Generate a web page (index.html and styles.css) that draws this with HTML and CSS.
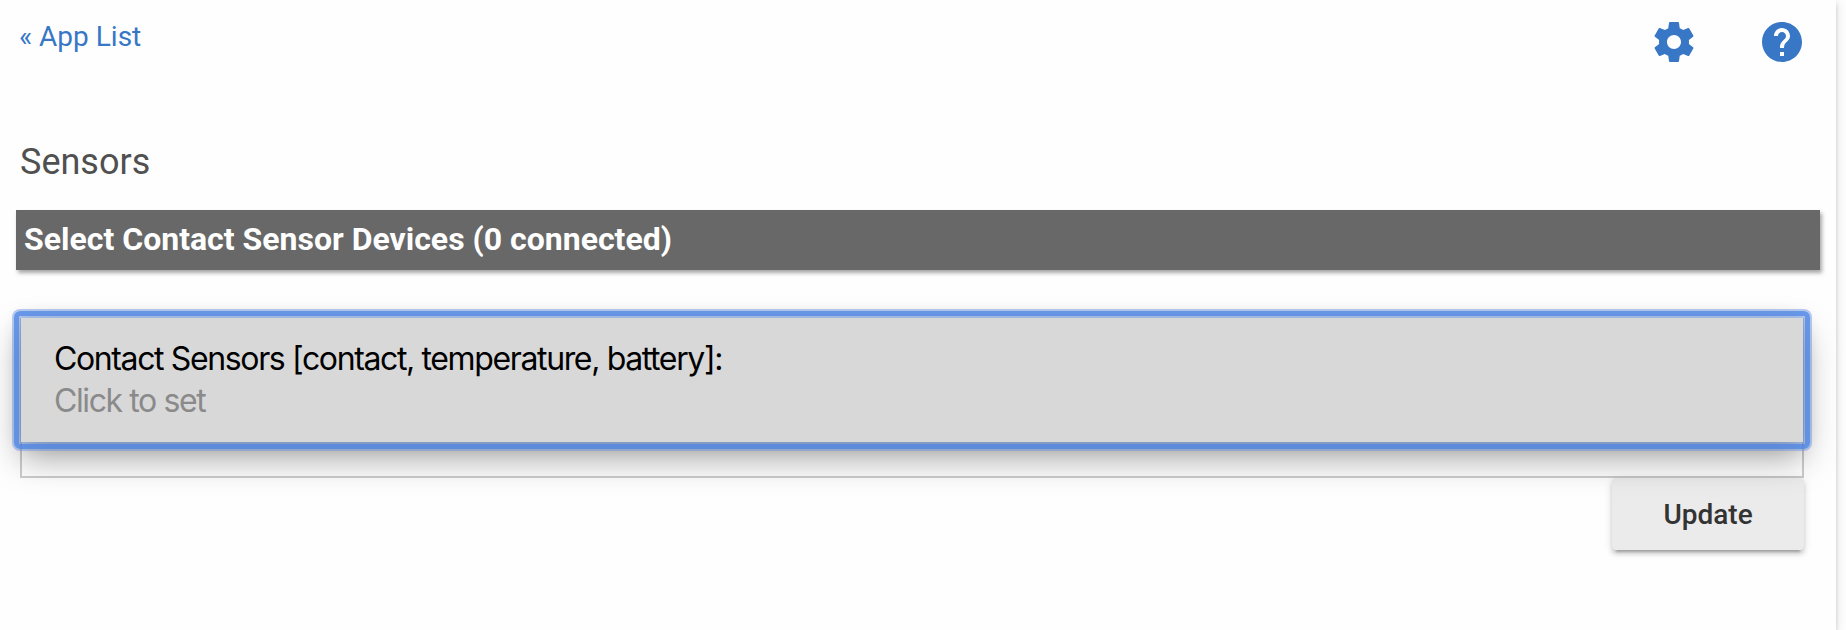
FILE: index.html
```html
<!DOCTYPE html>
<html lang="en">
<head>
    <meta charset="UTF-8">
    <meta name="viewport" content="width=device-width, initial-scale=1.0">
    <title>Sensors</title>
    <link rel="stylesheet" href="styles.css">
</head>
<body>
    <main class="panel">
        <header class="top-bar">
            <a class="back-link" href="#">« App List</a>
            <nav class="actions">
                <a class="action" href="#" aria-label="Settings">
                    <svg class="icon" viewBox="0 0 24 24"><path d="M19.43 12.98c.04-.32.07-.64.07-.98s-.03-.66-.07-.98l2.11-1.65c.19-.15.24-.42.12-.64l-2-3.46c-.12-.22-.39-.3-.61-.22l-2.49 1c-.52-.4-1.08-.73-1.69-.98l-.38-2.65C14.46 2.18 14.25 2 14 2h-4c-.25 0-.46.18-.49.42l-.38 2.65c-.61.25-1.17.59-1.69.98l-2.49-1c-.23-.09-.49 0-.61.22l-2 3.46c-.13.22-.07.49.12.64l2.11 1.65c-.04.32-.07.65-.07.98s.03.66.07.98l-2.11 1.65c-.19.15-.24.42-.12.64l2 3.46c.12.22.39.3.61.22l2.49-1c.52.4 1.08.73 1.69.98l.38 2.65c.03.24.24.42.49.42h4c.25 0 .46-.18.49-.42l.38-2.65c.61-.25 1.17-.59 1.69-.98l2.49 1c.23.09.49 0 .61-.22l2-3.46c.12-.22.07-.49-.12-.64l-2.11-1.65zM12 15.5c-1.93 0-3.5-1.57-3.5-3.5s1.57-3.5 3.5-3.5 3.5 1.57 3.5 3.5-1.57 3.5-3.5 3.5z"/></svg>
                </a>
                <a class="action" href="#" aria-label="Help">
                    <svg class="icon" viewBox="0 0 24 24"><path d="M12 2C6.48 2 2 6.48 2 12s4.48 10 10 10 10-4.48 10-10S17.52 2 12 2zm1 17h-2v-2h2v2zm2.07-7.75l-.9.92C13.45 12.9 13 13.5 13 15h-2v-.5c0-1.1.45-2.1 1.17-2.83l1.24-1.26c.37-.36.59-.86.59-1.41 0-1.1-.9-2-2-2s-2 .9-2 2H8c0-2.21 1.79-4 4-4s4 1.79 4 4c0 .88-.36 1.68-.93 2.25z"/></svg>
                </a>
            </nav>
        </header>

        <h1 class="page-title">Sensors</h1>
        <h2 class="section-bar">Select Contact Sensor Devices (0 connected)</h2>

        <form class="settings">
            <div class="input-group">
                <button type="button" class="device-select">
                    <span class="device-label">Contact Sensors [contact, temperature, battery]:</span>
                    <span class="device-hint">Click to set</span>
                </button>
            </div>
            <button type="button" class="update-button">Update</button>
        </form>
    </main>
</body>
</html>
```
FILE: styles.css
```css
* {
    box-sizing: border-box;
}

body {
    margin: 0;
    background: #fdfdfd;
    font-family: Roboto, "Liberation Sans", sans-serif;
    overflow: hidden;
}

.panel {
    width: 1836px;
    height: 630px;
    background: #fefefe;
    box-shadow: 0 4px 4px rgba(0, 0, 0, 0.14), 0 6px 2px -4px rgba(0, 0, 0, 0.2), 0 2px 10px rgba(0, 0, 0, 0.12);
}

.top-bar {
    display: flex;
    justify-content: space-between;
    align-items: flex-start;
    padding: 18px 30px 0 19px;
}

.back-link {
    padding-top: 1px;
    color: #3777c5;
    font-size: 28px;
    line-height: 36px;
    text-decoration: none;
}

.actions {
    display: flex;
    gap: 60px;
}

.action {
    display: block;
    height: 48px;
}

.icon {
    display: block;
    width: 48px;
    height: 48px;
    fill: #3777c5;
}

.page-title {
    margin: 72px 0 0 20px;
    color: #505050;
    font-size: 36px;
    font-weight: 400;
    line-height: 48px;
}

.section-bar {
    width: 1804px;
    height: 60px;
    margin: 24px 0 0 16px;
    padding: 0 8px;
    background: #686868;
    box-shadow: 2px 3px 4px rgba(0, 0, 0, 0.35);
    color: #fff;
    font-size: 32px;
    font-weight: 700;
    line-height: 58px;
}

.settings {
    display: flex;
    flex-direction: column;
    align-items: flex-end;
    width: 1784px;
    margin: 48px 0 0 20px;
}

.input-group {
    width: 100%;
    height: 160px;
    border: 2px solid #ccc;
    border-top: 0;
}

.device-select {
    position: relative;
    z-index: 1;
    display: flex;
    flex-direction: column;
    width: 1782px;
    height: 124px;
    margin: 0 -1px;
    padding: 20px 33px;
    border: 0;
    background: #d8d8d8;
    box-shadow: 0 0 16px rgba(0, 0, 0, 0.18), 0 16px 32px rgba(0, 0, 0, 0.36);
    font-family: Inter, sans-serif;
    font-size: 32px;
    line-height: 42px;
    text-align: left;
}

/* focus ring, soft on both edges */
.device-select::after {
    content: "";
    position: absolute;
    inset: -7px;
    border: 5px solid rgba(78, 132, 228, 0.84);
    border-radius: 6px;
    box-shadow: 0 0 0 2px rgba(100, 145, 228, 0.45), inset 0 0 0 2px rgba(100, 145, 228, 0.5);
}

.device-label {
    color: #000;
    letter-spacing: -1.37px;
}

.device-hint {
    color: #8a8a8a;
    letter-spacing: -1.4px;
}

.update-button {
    width: 192px;
    height: 72px;
    padding: 0;
    border: 0;
    border-radius: 4px;
    background: #ebebeb;
    box-shadow: 0 4px 4px rgba(0, 0, 0, 0.14), 0 6px 2px -4px rgba(0, 0, 0, 0.2), 0 2px 10px rgba(0, 0, 0, 0.12);
    color: #333;
    font-family: inherit;
    font-size: 28px;
    font-weight: 500;
}
```
